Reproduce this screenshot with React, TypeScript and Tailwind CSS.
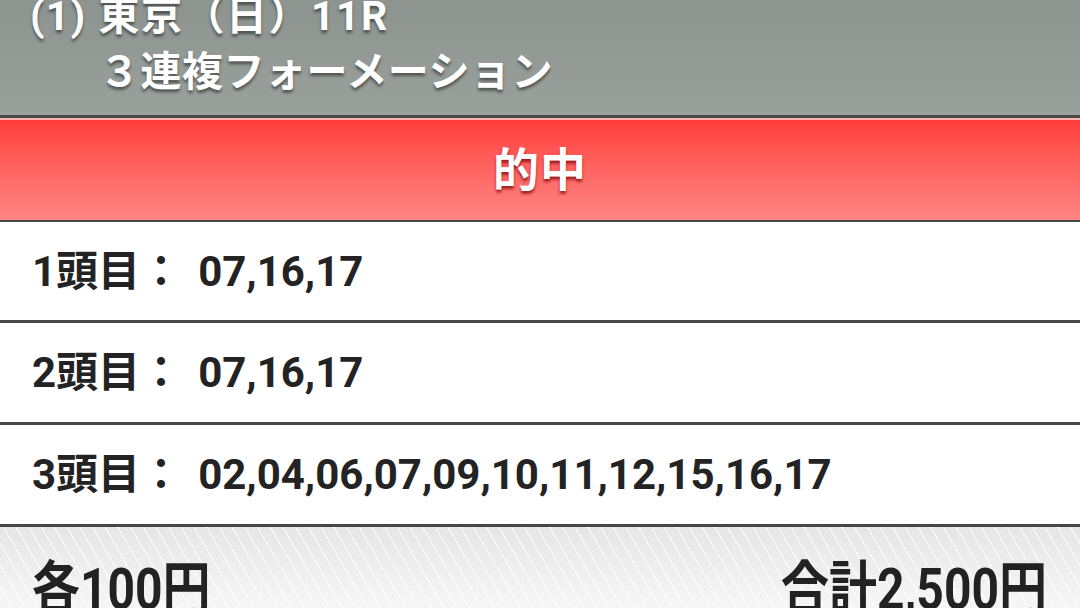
import React from 'react';

const FONT = "font-['Roboto','Noto_Sans_CJK_JP',sans-serif]";

const picks = [
  { label: '1頭目', nums: '07,16,17', h: 'h-[98px]' },
  { label: '2頭目', nums: '07,16,17', h: 'h-[99px]' },
  { label: '3頭目', nums: '02,04,06,07,09,10,11,12,15,16,17', h: 'h-[99px]' },
];

const App = () => {
  return (
    <div className={`w-[1080px] h-[608px] overflow-hidden bg-white ${FONT}`}>
      {/* race header */}
      <div className="h-[115px] overflow-hidden flex flex-col justify-end pb-[15px] bg-gradient-to-b from-[#8d948f] to-[#9aa19c] text-white font-bold text-[41px] leading-[56px] [text-shadow:0_3px_3px_rgba(0,0,0,0.45)]">
        <div className="pl-[30px] whitespace-nowrap tracking-[1.5px]">(1) 東京（日）11R</div>
        <div className="pl-[99px] whitespace-nowrap tracking-[0.5px]">３連複フォーメーション</div>
      </div>
      <div className="h-[3px] bg-[#474747]" />

      {/* result banner */}
      <div className="h-[104px] border-t-2 border-[#ffb3b3] border-b-2 border-b-[#474747] bg-gradient-to-b from-[#ff3a3a] to-[#ff8585] flex items-center justify-center">
        <span className="text-white font-bold text-[46px] leading-none tracking-[1px] [text-shadow:0_3px_3px_rgba(120,0,0,0.7)]">
          的中
        </span>
      </div>

      {/* horse selections */}
      {picks.map((p) => (
        <div
          key={p.label}
          className={`${p.h} box-content border-b-[3px] border-[#474747] flex items-center pl-[32px] text-[42px] font-bold text-[#232323] whitespace-nowrap`}
        >
          <span>{p.label}：</span>
          <span className="ml-[16px]">{p.nums}</span>
        </div>
      ))}

      {/* footer totals */}
      <div className="h-[81px] bg-[repeating-linear-gradient(60deg,transparent_0px,transparent_10px,rgba(255,255,255,0.9)_10px,rgba(255,255,255,0.9)_11px),linear-gradient(to_bottom,#e6e6e6,#f6f6f6)] flex justify-between items-start pl-[32px] pr-[33px] pt-[34px] text-[#222] font-bold text-[48px] leading-none">
        <span className="inline-block scale-y-[1.2] origin-top-left">各100円</span>
        <span className="inline-block scale-y-[1.2] origin-top-right">合計2,500円</span>
      </div>
    </div>
  );
};

export default App;
